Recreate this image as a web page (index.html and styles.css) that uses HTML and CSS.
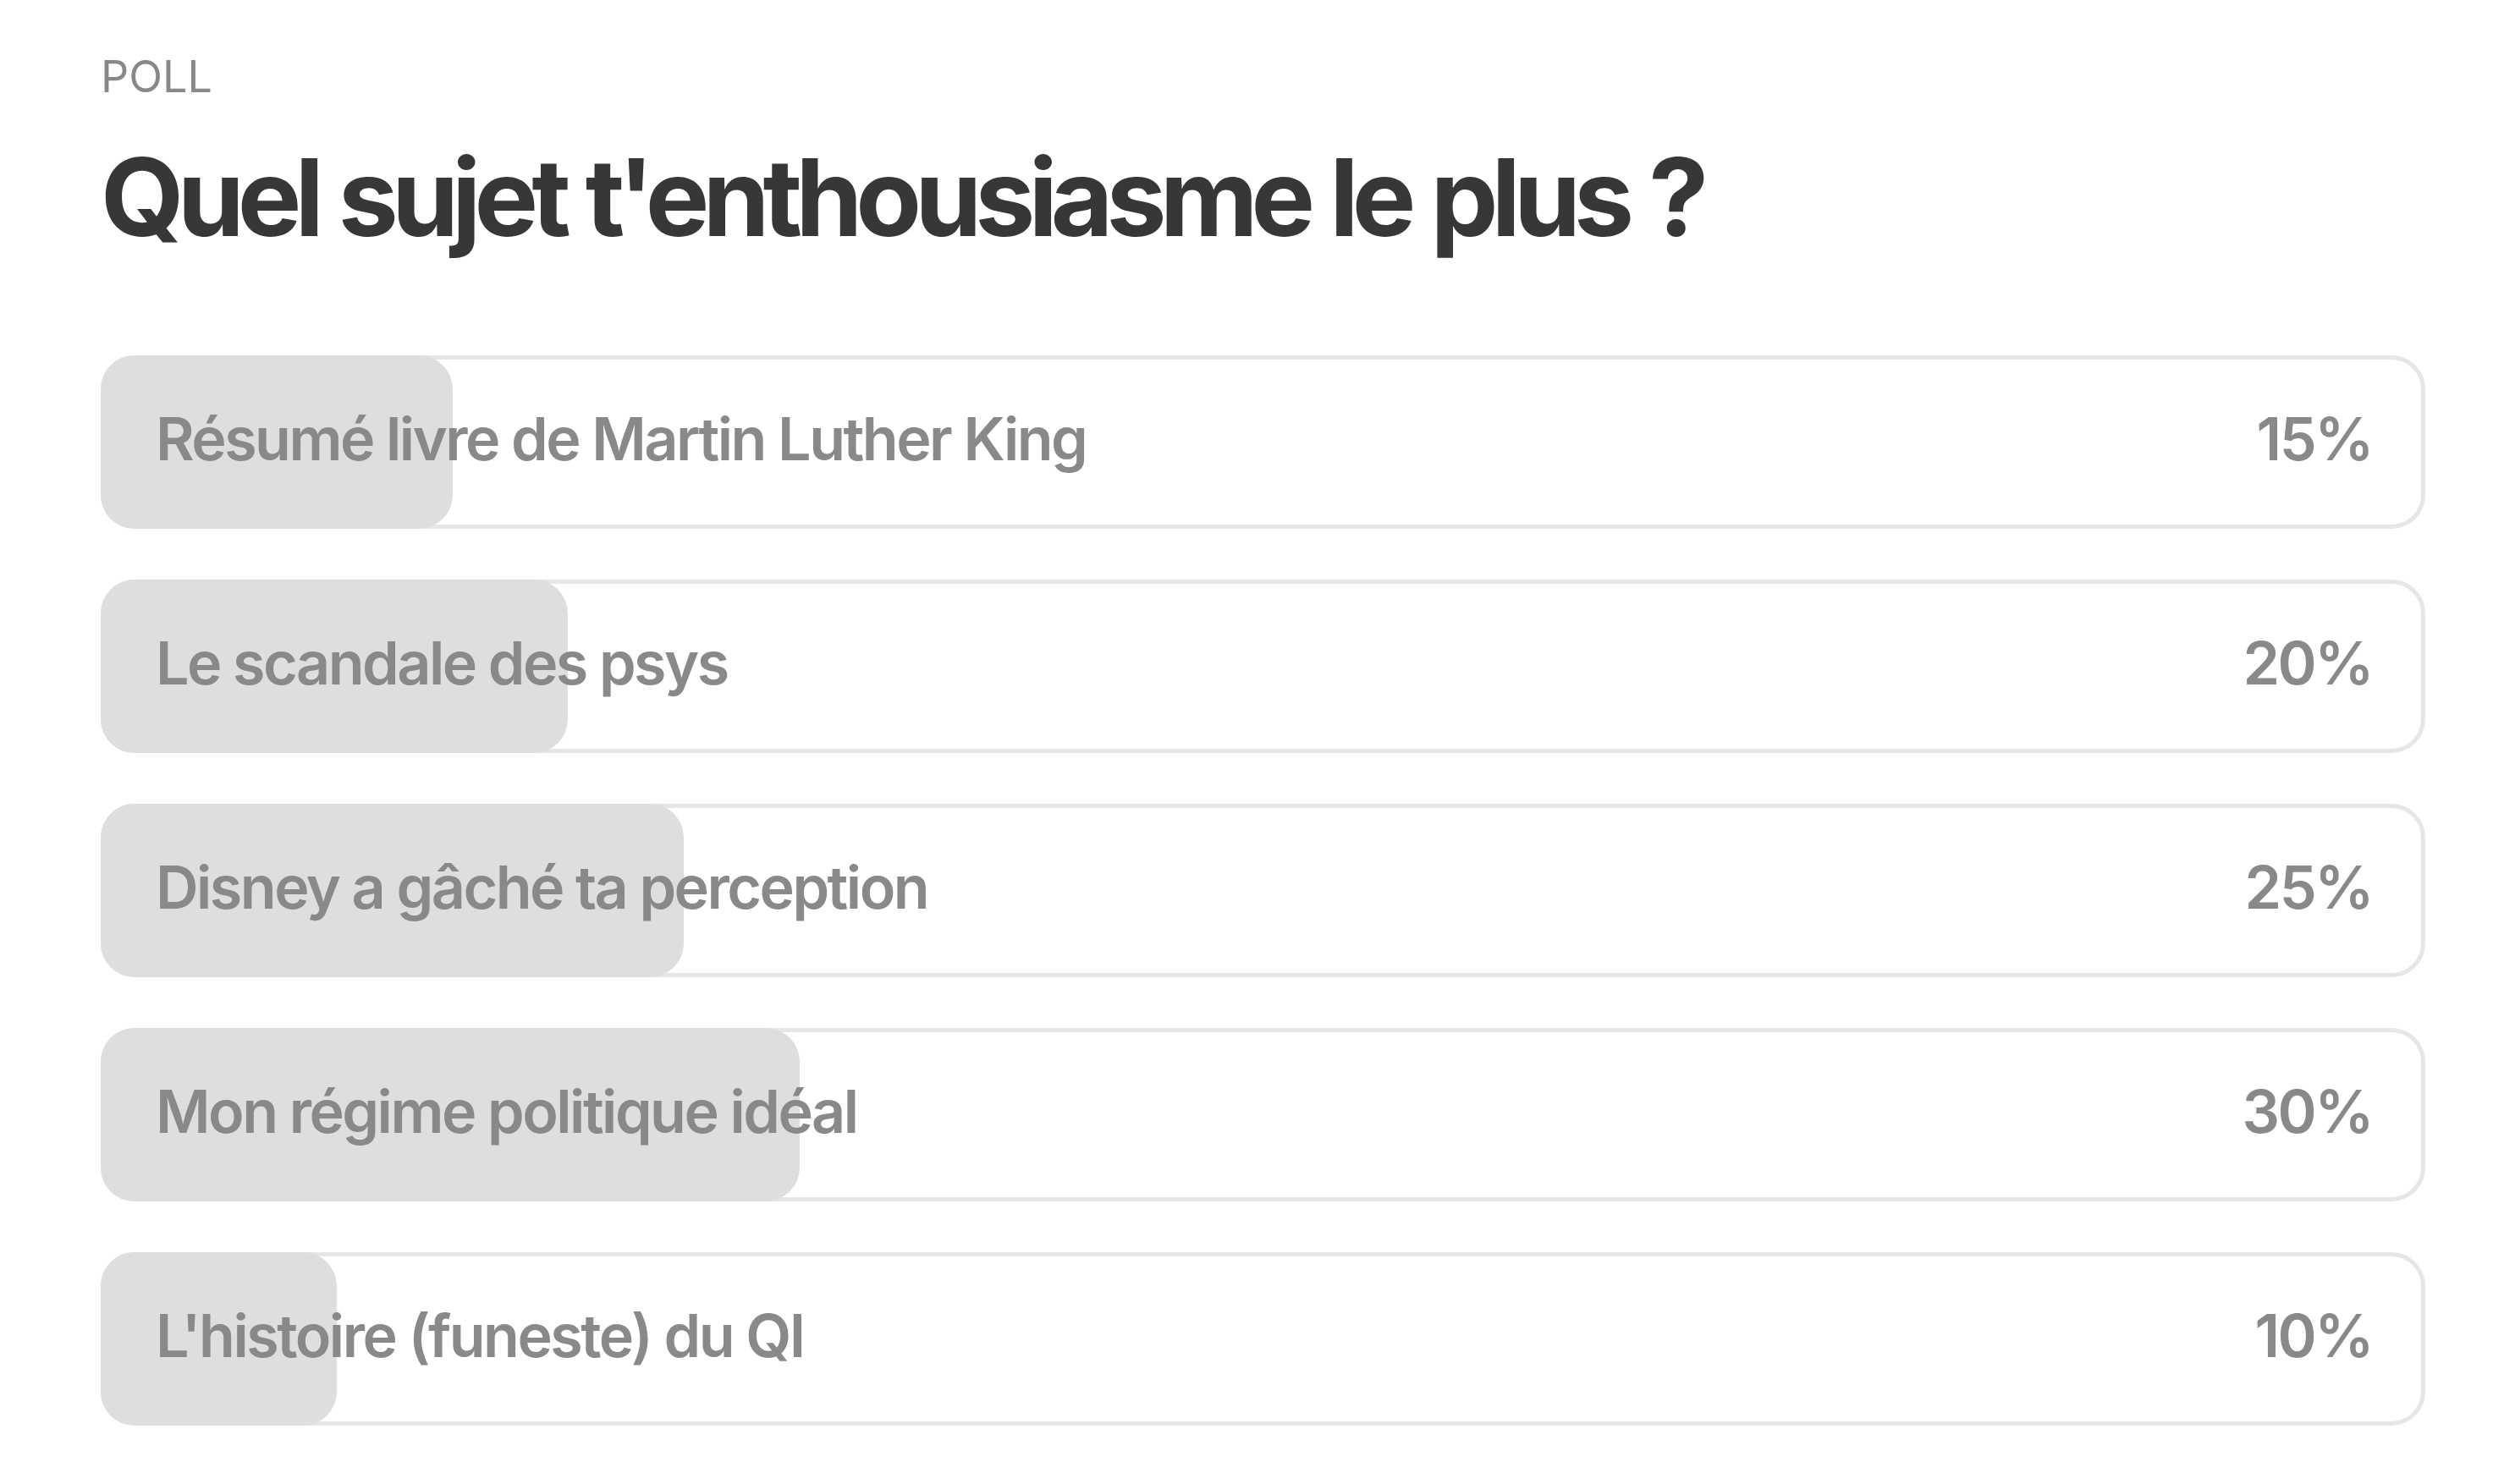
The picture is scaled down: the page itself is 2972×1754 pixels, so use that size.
FILE: index.html
```html
<!DOCTYPE html>
<html lang="fr">
<head>
  <meta charset="UTF-8" />
  <meta name="viewport" content="width=device-width, initial-scale=1.0" />
  <title>Poll</title>
  <link rel="stylesheet" href="styles.css">
</head>
<body>
  <div class="poll">
    <div class="kicker">POLL</div>
    <h1>Quel sujet t'enthousiasme le plus ?</h1>

    <div class="options">
      <div class="option">
        <div class="fill" style="--pct: 15%"></div>
        <span class="label">Résumé livre de Martin Luther King</span>
        <span class="pct">15%</span>
      </div>
      <div class="option">
        <div class="fill" style="--pct: 20%"></div>
        <span class="label">Le scandale des psys</span>
        <span class="pct">20%</span>
      </div>
      <div class="option">
        <div class="fill" style="--pct: 25%"></div>
        <span class="label">Disney a gâché ta perception</span>
        <span class="pct">25%</span>
      </div>
      <div class="option">
        <div class="fill" style="--pct: 30%"></div>
        <span class="label">Mon régime politique idéal</span>
        <span class="pct">30%</span>
      </div>
      <div class="option">
        <div class="fill" style="--pct: 10%"></div>
        <span class="label">L'histoire (funeste) du QI</span>
        <span class="pct">10%</span>
      </div>
    </div>
  </div>
</body>
</html>
```

FILE: styles.css
```css
body {
  margin: 0;
  background: #fff;
  font-family: Inter, "Noto Sans", sans-serif;
}

.poll {
  padding: 60px 106px 0 119px;
}

.kicker {
  font-size: 52px;
  line-height: 62px;
  color: #888;
}

h1 {
  margin: 36px 0 0;
  font-size: 127px;
  line-height: 150px;
  font-weight: 700;
  letter-spacing: -8px;
  word-spacing: 3px;
  color: #363836;
}

.options {
  display: flex;
  flex-direction: column;
  gap: 60px;
  margin-top: 112px;
}

.option {
  position: relative;
  display: flex;
  align-items: center;
  justify-content: space-between;
  height: 187px;
  padding: 0 58px 8px 60px;
  border: 5px solid #e6e6e6;
  border-radius: 40px;
  font-size: 70px;
  font-weight: 600;
  letter-spacing: -2.5px;
  color: #888988;
}

.fill {
  position: absolute;
  top: -5px;
  bottom: -5px;
  left: -5px;
  width: calc(var(--pct) + 5px);
  background: #dedede;
  border-radius: 40px;
}

.label, .pct {
  position: relative;
}
```
